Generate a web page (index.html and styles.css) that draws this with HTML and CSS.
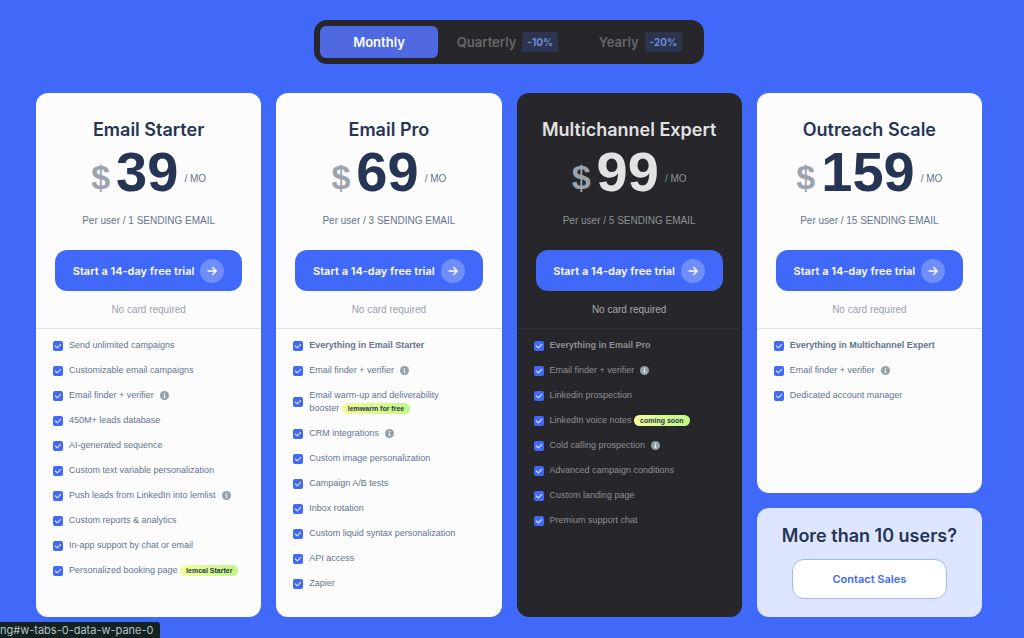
FILE: index.html
```html
<!DOCTYPE html>
<html lang="en">
    <head>
        <meta charset="UTF-8" />
        <meta name="viewport" content="width=device-width, initial-scale=1.0" />
        <title>Pricing</title>
        <link rel="stylesheet" href="styles.css">
    </head>
    <body>
        <svg class="sprite" aria-hidden="true">
            <symbol id="check" viewBox="0 0 10 10">
                <rect width="10" height="10" rx="2" fill="#4169f9" />
                <path d="M2.4 5 4.3 6.8 7.7 3.4" fill="none" stroke="#dfe6ff" stroke-width="1.1" stroke-linecap="round" stroke-linejoin="round" />
            </symbol>
            <symbol id="info" viewBox="0 0 10 10">
                <circle cx="5" cy="5" r="5" fill="currentColor" />
                <circle class="info-mark" cx="5" cy="2.9" r="0.8" />
                <path class="info-mark" d="M4 4.3h1.6v2.4h.6v.9H3.9v-.9h.6V5.2H4z" />
            </symbol>
            <symbol id="arrow" viewBox="0 0 24 24">
                <circle cx="12" cy="12" r="12" fill="#fff" fill-opacity="0.25" />
                <path d="M8 12h8M12.8 8.6 16.2 12l-3.4 3.4" fill="none" stroke="#fff" stroke-width="1.4" stroke-linecap="round" stroke-linejoin="round" />
            </symbol>
        </svg>

        <main class="pricing">
            <div class="tabs" role="tablist">
                <button class="tab active" role="tab" aria-selected="true">Monthly</button>
                <button class="tab" role="tab" aria-selected="false">Quarterly <span class="discount">-10%</span></button>
                <button class="tab" role="tab" aria-selected="false">Yearly <span class="discount">-20%</span></button>
            </div>

            <div class="plans">
                <section class="card">
                    <div class="card-head">
                        <h2>Email Starter</h2>
                        <div class="price"><span class="currency">$</span><span class="amount">39</span><span class="period">/ MO</span></div>
                        <p class="per-user">Per user / 1 SENDING EMAIL</p>
                        <a href="#" class="trial">Start a 14-day free trial <svg><use href="#arrow" /></svg></a>
                        <p class="no-card">No card required</p>
                    </div>
                    <ul class="features">
                        <li><svg><use href="#check" /></svg><span>Send unlimited campaigns</span></li>
                        <li><svg><use href="#check" /></svg><span>Customizable email campaigns</span></li>
                        <li><svg><use href="#check" /></svg><span>Email finder + verifier</span><svg class="info"><use href="#info" /></svg></li>
                        <li><svg><use href="#check" /></svg><span>450M+ leads database</span></li>
                        <li><svg><use href="#check" /></svg><span>AI-generated sequence</span></li>
                        <li><svg><use href="#check" /></svg><span>Custom text variable personalization</span></li>
                        <li><svg><use href="#check" /></svg><span>Push leads from LinkedIn into lemlist</span><svg class="info"><use href="#info" /></svg></li>
                        <li><svg><use href="#check" /></svg><span>Custom reports &amp; analytics</span></li>
                        <li><svg><use href="#check" /></svg><span>In-app support by chat or email</span></li>
                        <li><svg><use href="#check" /></svg><span>Personalized booking page <em class="tag">lemcal Starter</em></span></li>
                    </ul>
                </section>

                <section class="card">
                    <div class="card-head">
                        <h2>Email Pro</h2>
                        <div class="price"><span class="currency">$</span><span class="amount">69</span><span class="period">/ MO</span></div>
                        <p class="per-user">Per user / 3 SENDING EMAIL</p>
                        <a href="#" class="trial">Start a 14-day free trial <svg><use href="#arrow" /></svg></a>
                        <p class="no-card">No card required</p>
                    </div>
                    <ul class="features">
                        <li><svg><use href="#check" /></svg><strong>Everything in Email Starter</strong></li>
                        <li><svg><use href="#check" /></svg><span>Email finder + verifier</span><svg class="info"><use href="#info" /></svg></li>
                        <li><svg><use href="#check" /></svg><span>Email warm-up and deliverability<br>booster <em class="tag">lemwarm for free</em></span></li>
                        <li><svg><use href="#check" /></svg><span>CRM integrations</span><svg class="info"><use href="#info" /></svg></li>
                        <li><svg><use href="#check" /></svg><span>Custom image personalization</span></li>
                        <li><svg><use href="#check" /></svg><span>Campaign A/B tests</span></li>
                        <li><svg><use href="#check" /></svg><span>Inbox rotation</span></li>
                        <li><svg><use href="#check" /></svg><span>Custom liquid syntax personalization</span></li>
                        <li><svg><use href="#check" /></svg><span>API access</span></li>
                        <li><svg><use href="#check" /></svg><span>Zapier</span></li>
                    </ul>
                </section>

                <section class="card dark">
                    <div class="card-head">
                        <h2>Multichannel Expert</h2>
                        <div class="price"><span class="currency">$</span><span class="amount">99</span><span class="period">/ MO</span></div>
                        <p class="per-user">Per user / 5 SENDING EMAIL</p>
                        <a href="#" class="trial">Start a 14-day free trial <svg><use href="#arrow" /></svg></a>
                        <p class="no-card">No card required</p>
                    </div>
                    <ul class="features">
                        <li><svg><use href="#check" /></svg><strong>Everything in Email Pro</strong></li>
                        <li><svg><use href="#check" /></svg><span>Email finder + verifier</span><svg class="info"><use href="#info" /></svg></li>
                        <li><svg><use href="#check" /></svg><span>Linkedin prospection</span></li>
                        <li><svg><use href="#check" /></svg><span>LinkedIn voice notes <em class="tag">coming soon</em></span></li>
                        <li><svg><use href="#check" /></svg><span>Cold calling prospection</span><svg class="info"><use href="#info" /></svg></li>
                        <li><svg><use href="#check" /></svg><span>Advanced campaign conditions</span></li>
                        <li><svg><use href="#check" /></svg><span>Custom landing page</span></li>
                        <li><svg><use href="#check" /></svg><span>Premium support chat</span></li>
                    </ul>
                </section>

                <div class="stack">
                    <section class="card">
                        <div class="card-head">
                            <h2>Outreach Scale</h2>
                            <div class="price"><span class="currency">$</span><span class="amount">159</span><span class="period">/ MO</span></div>
                            <p class="per-user">Per user / 15 SENDING EMAIL</p>
                            <a href="#" class="trial">Start a 14-day free trial <svg><use href="#arrow" /></svg></a>
                            <p class="no-card">No card required</p>
                        </div>
                        <ul class="features">
                            <li><svg><use href="#check" /></svg><strong>Everything in Multichannel Expert</strong></li>
                            <li><svg><use href="#check" /></svg><span>Email finder + verifier</span><svg class="info"><use href="#info" /></svg></li>
                            <li><svg><use href="#check" /></svg><span>Dedicated account manager</span></li>
                        </ul>
                    </section>
                    <section class="contact">
                        <h2>More than 10 users?</h2>
                        <a href="#" class="contact-link">Contact Sales</a>
                    </section>
                </div>
            </div>
        </main>

        <div class="status">ng#w-tabs-0-data-w-pane-0</div>
    </body>
</html>
```
FILE: styles.css
```css
* {
    box-sizing: border-box;
}
body {
    margin: 0;
    background: #4169f9;
    color: #263554;
    font-family: "Liberation Sans", Arial, sans-serif;
}
h2,
p,
ul {
    margin: 0;
    padding: 0;
}
.sprite {
    position: absolute;
    width: 0;
    height: 0;
}
.pricing {
    padding: 20px 42px 21px 36px;
}
.tabs {
    display: grid;
    grid-template-columns: 118px 1fr 1fr;
    gap: 6px;
    width: 390px;
    height: 44px;
    margin: 0 auto 29px;
    padding: 6px 0 6px 6px;
    background: #26262b;
    border-radius: 13px;
}
.tab {
    display: flex;
    align-items: center;
    justify-content: center;
    gap: 6px;
    padding: 0;
    border: 0;
    border-radius: 6px;
    background: none;
    color: #66666c;
    font-family: Inter, sans-serif;
    font-size: 13px;
    font-weight: 600;
}
.tab.active {
    background: #4e69e1;
    color: #fff;
}
.discount {
    padding: 0 5px;
    border-radius: 3px;
    background: #2d3450;
    color: #6c8ada;
    font-size: 10px;
    font-weight: 700;
    line-height: 20px;
}
.plans {
    display: grid;
    grid-template-columns: repeat(4, minmax(0, 1fr));
    gap: 15px;
}
.card {
    background: #fcfcfc;
    border-radius: 12px;
}
.card-head {
    display: flex;
    flex-direction: column;
    align-items: center;
    padding: 25px 19px 10px;
    border-bottom: 1px solid #dedfe2;
}
h2 {
    font-family: Inter, sans-serif;
    font-size: 18px;
    font-weight: 600;
    line-height: 24px;
    text-align: center;
    white-space: nowrap;
}
.price {
    display: flex;
    align-items: flex-end;
    gap: 6px;
    height: 59px;
}
.currency {
    color: #9ba3ae;
    font-size: 34px;
    font-weight: 700;
    line-height: 48px;
}
.amount {
    font-size: 56px;
    font-weight: 700;
    line-height: 59px;
}
.period,
.per-user {
    color: #64748f;
    font-size: 10px;
}
.period {
    line-height: 44px;
}
.per-user {
    margin-top: 12px;
    line-height: 16px;
}
.trial {
    display: flex;
    align-items: center;
    justify-content: center;
    gap: 6px;
    width: 100%;
    height: 41px;
    margin-top: 21px;
    border-radius: 12px;
    background: #4169f9;
    color: #fff;
    font-family: Inter, sans-serif;
    font-size: 11px;
    font-weight: 600;
    text-decoration: none;
    white-space: nowrap;
}
.trial svg {
    width: 24px;
    height: 24px;
}
.no-card {
    margin-top: 11px;
    color: #9aa1ad;
    font-size: 10px;
    line-height: 16px;
}
.features {
    display: flex;
    flex-direction: column;
    gap: 12px;
    padding: 10px 12px 27px 17px;
    color: #64748f;
    font-size: 9px;
    line-height: 13px;
    list-style: none;
}
.features li {
    display: flex;
    align-items: center;
    gap: 6px;
    white-space: nowrap;
}
.features svg {
    flex: none;
    width: 10px;
    height: 10px;
}
.features .info {
    width: 9px;
    height: 9px;
    color: #97a0aa;
}
.info-mark {
    fill: #fcfcfc;
}
.tag {
    display: inline-block;
    padding: 0 6px;
    border-radius: 6px;
    background: linear-gradient(90deg, #f6fd9b, #bff783);
    color: #263554;
    font-size: 7px;
    font-style: normal;
    font-weight: 700;
    line-height: 11px;
}
.dark {
    background: #26262b;
    color: #e2e2e3;
}
.dark .card-head {
    border-color: #2d2d32;
}
.dark .period,
.dark .per-user,
.dark .features {
    color: #8f9095;
}
.dark .no-card {
    color: #a9abb0;
}
.dark .info-mark {
    fill: #26262b;
}
.stack {
    display: grid;
    grid-template-columns: minmax(0, 1fr);
    grid-template-rows: 1fr auto;
    gap: 15px;
}
.contact {
    padding: 16px 35px 18px;
    border-radius: 12px;
    background: #dde6fe;
}
.contact h2 {
    display: flex;
    justify-content: center;
}
.contact-link {
    display: block;
    margin-top: 11px;
    border: 1px solid #a2b6fb;
    border-radius: 12px;
    background: #fff;
    color: #4169f9;
    font-family: Inter, sans-serif;
    font-size: 11px;
    font-weight: 600;
    line-height: 38px;
    text-align: center;
    text-decoration: none;
}
.status {
    position: fixed;
    bottom: 0;
    left: 0;
    padding-right: 6px;
    border-top-right-radius: 3px;
    background: #132324;
    color: #b9c0c1;
    font-family: Inter, sans-serif;
    font-size: 11px;
    line-height: 16px;
}
```
